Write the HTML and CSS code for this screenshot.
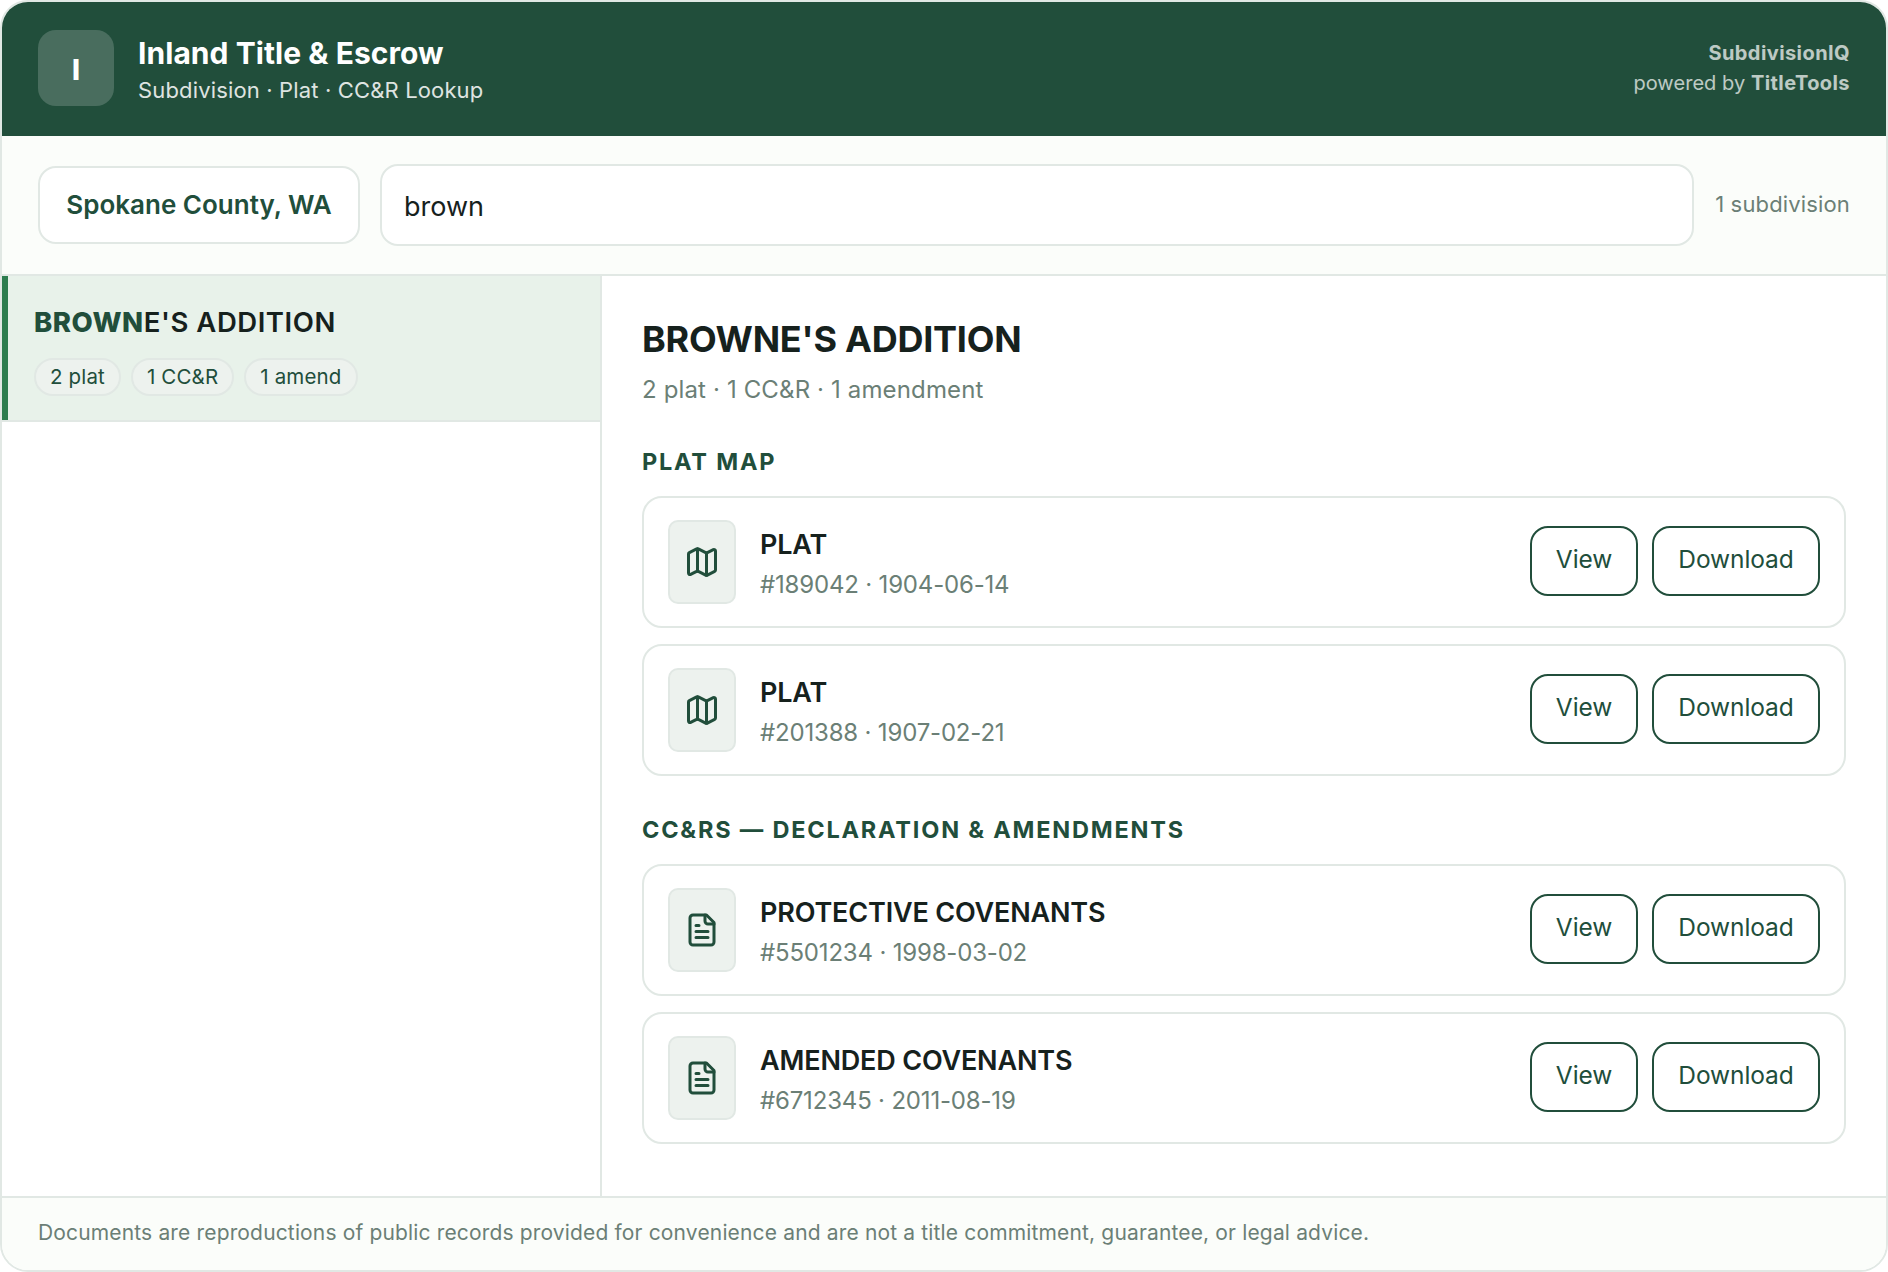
FILE: index.html
```html
<!DOCTYPE html>
<html lang="en">
<head>
    <meta charset="utf-8">
    <title>Inland Title &amp; Escrow - SubdivisionIQ</title>
    <link rel="stylesheet" href="styles.css">
</head>
<body>
    <!-- icons shared by the document cards -->
    <svg class="sprite" width="0" height="0">
        <symbol id="icon-map" viewBox="0 0 24 24">
            <path d="M14.106 5.553a2 2 0 0 0 1.788 0l3.659-1.83A1 1 0 0 1 21 4.619v12.764a1 1 0 0 1-.553.894l-4.553 2.277a2 2 0 0 1-1.788 0l-4.212-2.106a2 2 0 0 0-1.788 0l-3.659 1.83A1 1 0 0 1 3 19.381V6.618a1 1 0 0 1 .553-.894l4.553-2.277a2 2 0 0 1 1.788 0z"/>
            <path d="M15 5.764v15M9 3.236v15"/>
        </symbol>
        <symbol id="icon-doc" viewBox="0 0 24 24">
            <path d="M15 2H6a2 2 0 0 0-2 2v16a2 2 0 0 0 2 2h12a2 2 0 0 0 2-2V7Z"/>
            <path d="M14 2v4a2 2 0 0 0 2 2h4M10 9H8M16 13H8M16 17H8"/>
        </symbol>
    </svg>
    <div class="widget">
        <header class="header">
            <div class="logo">I</div>
            <div class="brand">
                <div class="brand-name">Inland Title &amp; Escrow</div>
                <div class="brand-sub">Subdivision · Plat · CC&amp;R Lookup</div>
            </div>
            <div class="powered"><b>SubdivisionIQ</b><br>powered by <b>TitleTools</b></div>
        </header>
        <div class="toolbar">
            <div class="county">Spokane County, WA</div>
            <input class="search" type="text" value="brown">
            <div class="count">1 subdivision</div>
        </div>
        <main class="main">
            <aside class="list">
                <div class="item active">
                    <div class="item-name"><b>BROWN</b>E'S ADDITION</div>
                    <div class="pills">
                        <span class="pill">2 plat</span>
                        <span class="pill">1 CC&amp;R</span>
                        <span class="pill">1 amend</span>
                    </div>
                </div>
            </aside>
            <section class="detail">
                <h1 class="detail-name">BROWNE'S ADDITION</h1>
                <div class="detail-sub">2 plat · 1 CC&amp;R · 1 amendment</div>

                <h2 class="group">PLAT MAP</h2>
                <div class="docs">
                    <div class="doc">
                        <div class="thumb"><svg class="icon"><use href="#icon-map"/></svg></div>
                        <div class="info">
                            <div class="doc-name">PLAT</div>
                            <div class="doc-meta">#189042 · 1904-06-14</div>
                        </div>
                        <div class="actions">
                            <button class="btn view">View</button>
                            <button class="btn download">Download</button>
                        </div>
                    </div>
                    <div class="doc">
                        <div class="thumb"><svg class="icon"><use href="#icon-map"/></svg></div>
                        <div class="info">
                            <div class="doc-name">PLAT</div>
                            <div class="doc-meta">#201388 · 1907-02-21</div>
                        </div>
                        <div class="actions">
                            <button class="btn view">View</button>
                            <button class="btn download">Download</button>
                        </div>
                    </div>
                </div>

                <h2 class="group">CC&amp;RS — DECLARATION &amp; AMENDMENTS</h2>
                <div class="docs">
                    <div class="doc">
                        <div class="thumb"><svg class="icon"><use href="#icon-doc"/></svg></div>
                        <div class="info">
                            <div class="doc-name">PROTECTIVE COVENANTS</div>
                            <div class="doc-meta">#5501234 · 1998-03-02</div>
                        </div>
                        <div class="actions">
                            <button class="btn view">View</button>
                            <button class="btn download">Download</button>
                        </div>
                    </div>
                    <div class="doc">
                        <div class="thumb"><svg class="icon"><use href="#icon-doc"/></svg></div>
                        <div class="info">
                            <div class="doc-name">AMENDED COVENANTS</div>
                            <div class="doc-meta">#6712345 · 2011-08-19</div>
                        </div>
                        <div class="actions">
                            <button class="btn view">View</button>
                            <button class="btn download">Download</button>
                        </div>
                    </div>
                </div>
            </section>
        </main>
        <footer class="footer">Documents are reproductions of public records provided for convenience and are not a title commitment, guarantee, or legal advice.</footer>
    </div>
</body>
</html>
```
FILE: styles.css
```css
:root {
    --brand: #214e3b;
    --accent: #2e7d4f;
    --ink: #16211d;
    --muted: #6b7f76;
    --line: #e1e8e4;
    --soft: #edf2ee;
    --tint: #fbfdfa;
}
* {
    box-sizing: border-box;
}
body {
    margin: 0;
    background: #fff;
    color: var(--ink);
    font-family: Inter, "Liberation Sans", sans-serif;
}
.sprite {
    display: none;
}
.widget {
    display: flex;
    flex-direction: column;
    height: 1272px;
    border: 2px solid var(--line);
    border-radius: 28px;
    overflow: hidden;
    background: #fff;
}

/* header */
.header {
    display: flex;
    align-items: flex-start;
    gap: 24px;
    height: 134px;
    padding: 28px 36px;
    background: var(--brand);
    color: #fff;
}
.logo {
    width: 76px;
    height: 76px;
    padding-top: 4px;
    border-radius: 18px;
    background: rgba(255, 255, 255, 0.18);
    font-size: 28px;
    font-weight: 800;
    line-height: 72px;
    text-align: center;
}
.brand {
    flex: 1;
    padding-top: 5px;
}
.brand-name {
    font-size: 30px;
    font-weight: 700;
    line-height: 36px;
    letter-spacing: 0.05px;
}
.brand-sub {
    margin-top: 5px;
    font-size: 22px;
    line-height: 28px;
    letter-spacing: 0.15px;
    opacity: 0.85;
}
.powered {
    padding-top: 8px;
    font-size: 20px;
    line-height: 30px;
    letter-spacing: 0.05px;
    text-align: right;
    opacity: 0.7;
}
.powered b {
    letter-spacing: 0.42px;
}

/* toolbar */
.toolbar {
    display: flex;
    align-items: center;
    gap: 20px;
    height: 140px;
    padding: 28px 36px;
    background: var(--tint);
    border-bottom: 2px solid var(--line);
}
.county {
    width: 322px;
    height: 78px;
    border: 2px solid var(--line);
    border-radius: 18px;
    background: #fff;
    color: var(--brand);
    font-size: 26px;
    font-weight: 600;
    line-height: 74px;
    text-align: center;
}
.search {
    flex: 1;
    height: 82px;
    padding: 2px 22px 0;
    border: 2px solid var(--line);
    border-radius: 18px;
    background: #fff;
    color: var(--ink);
    font: 27px Inter, "Liberation Sans", sans-serif;
    outline: none;
}
.count {
    width: 136px;
    margin-bottom: 2px;
    color: var(--muted);
    font-size: 22px;
    letter-spacing: 0.15px;
    line-height: 30px;
    text-align: right;
    white-space: nowrap;
}

/* results */
.main {
    display: grid;
    grid-template-columns: 600px 1fr;
    height: 920px;
}
.list {
    border-right: 2px solid var(--line);
}
.item {
    padding: 28px 26px 24px;
    border-bottom: 2px solid var(--line);
}
.item.active {
    box-shadow: inset 6px 0 var(--accent);
    padding-left: 32px;
    background: #e8f2ea;
}
.item-name {
    font-size: 27.5px;
    font-weight: 600;
    line-height: 36px;
    letter-spacing: 0.55px;
}
.item-name b {
    color: var(--brand);
    font-weight: 800;
}
.pills {
    display: flex;
    gap: 10px;
    margin-top: 18px;
}
.pill {
    height: 38px;
    padding: 0 14px;
    border: 2px solid var(--line);
    border-radius: 19px;
    background: var(--soft);
    color: var(--brand);
    font-size: 20.5px;
    line-height: 34px;
    letter-spacing: 0.15px;
}

/* detail */
.detail {
    padding: 41px 40px 0;
}
.detail-name {
    margin: 0;
    font-size: 36px;
    font-weight: 700;
    line-height: 44px;
    letter-spacing: -0.25px;
}
.detail-sub {
    margin-top: 14px;
    color: var(--muted);
    font-size: 24px;
    line-height: 30px;
    letter-spacing: 0.14px;
}
.group {
    margin: 39px 0 19px;
    color: var(--brand);
    font-size: 23.5px;
    font-weight: 700;
    line-height: 30px;
    letter-spacing: 1.8px;
}
.detail-sub + .group {
    margin-top: 42px;
}
.docs {
    display: flex;
    flex-direction: column;
    gap: 16px;
}
.doc {
    display: flex;
    align-items: center;
    gap: 24px;
    height: 132px;
    padding: 0 24px;
    border: 2px solid var(--line);
    border-radius: 20px;
}
.thumb {
    display: flex;
    align-items: center;
    justify-content: center;
    width: 68px;
    height: 84px;
    border: 2px solid var(--line);
    border-radius: 10px;
    background: var(--soft);
    color: var(--brand);
}
.icon {
    width: 36px;
    height: 36px;
    fill: none;
    stroke: currentColor;
    stroke-width: 2;
    stroke-linecap: round;
    stroke-linejoin: round;
}
.info {
    flex: 1;
    padding-top: 2px;
}
.doc-name {
    font-size: 27px;
    font-weight: 600;
    line-height: 34px;
    letter-spacing: -0.17px;
}
.doc-meta {
    margin-top: 9px;
    color: var(--muted);
    font-size: 24px;
    line-height: 27px;
    letter-spacing: -0.18px;
}
.actions {
    display: flex;
    gap: 14px;
    margin-bottom: 2px;
}
.btn {
    height: 70px;
    padding: 0 0 4px;
    border: 2px solid var(--brand);
    border-radius: 18px;
    background: #fff;
    color: var(--brand);
    font: 24.5px Inter, "Liberation Sans", sans-serif;
    letter-spacing: -0.1px;
}
.view {
    width: 108px;
}
.download {
    width: 168px;
}

.footer {
    flex: 1;
    padding: 20px 36px 0;
    border-top: 2px solid var(--line);
    background: var(--tint);
    color: var(--muted);
    font-size: 21px;
    line-height: 30px;
    letter-spacing: 0.155px;
}
```
